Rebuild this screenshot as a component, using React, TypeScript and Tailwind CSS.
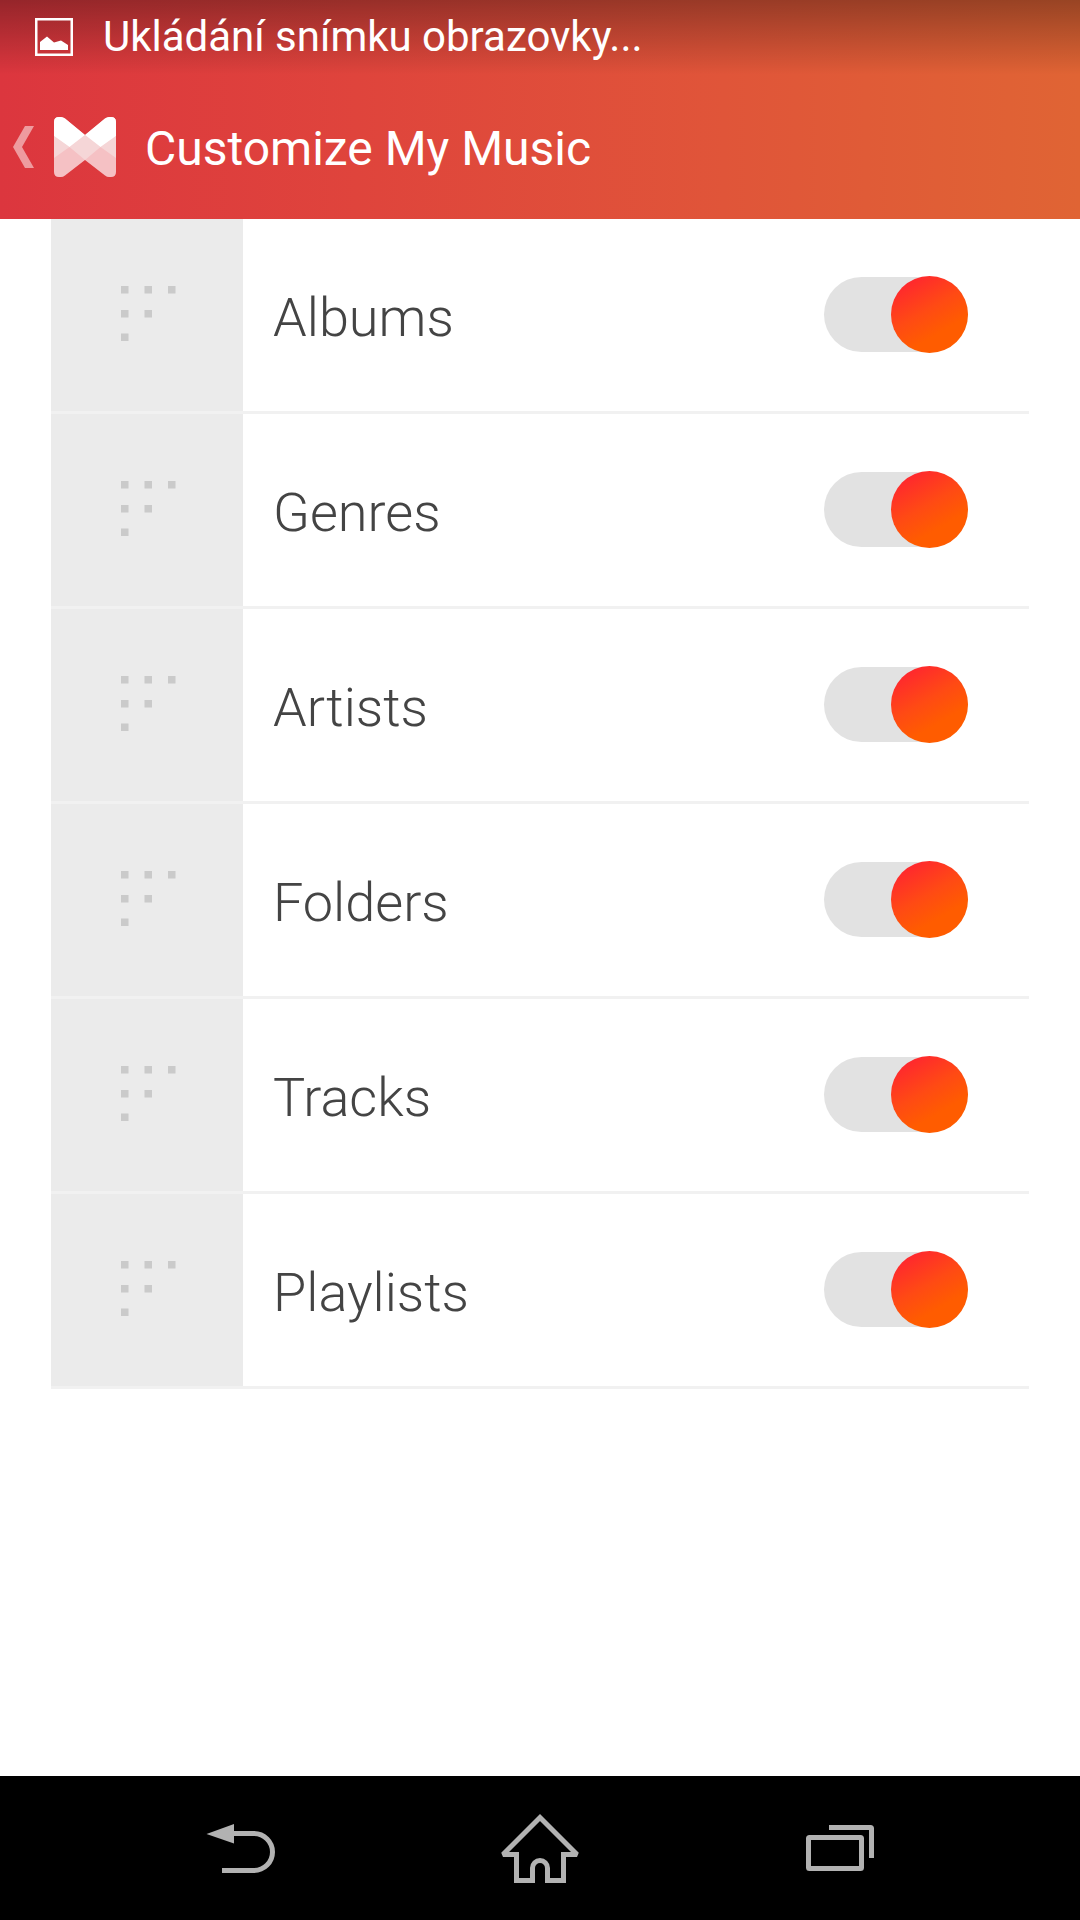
import { useState } from 'react';

interface Section {
  id: string;
  name: string;
}

const sections: Section[] = [
  { id: 'albums', name: 'Albums' },
  { id: 'genres', name: 'Genres' },
  { id: 'artists', name: 'Artists' },
  { id: 'folders', name: 'Folders' },
  { id: 'tracks', name: 'Tracks' },
  { id: 'playlists', name: 'Playlists' },
];

function PictureIcon() {
  return (
    <svg viewBox="0 0 38 38" className="size-[38px]" fill="none" aria-hidden="true">
      <rect x="1.25" y="1.25" width="35.5" height="35.5" stroke="#fff" strokeWidth="2.5" />
      <path d="M5 32V24L12 18.5L19 24.5L26 22.5L33 27V32Z" fill="#fff" />
    </svg>
  );
}

function BackChevron() {
  return (
    <svg viewBox="0 0 21 42" className="h-[42px] w-[21px]" aria-hidden="true">
      <path d="M12 0H21L9 21L21 42H12L0 21Z" fill="#fff" fillOpacity="0.5" />
    </svg>
  );
}

function Logo() {
  return (
    <svg viewBox="0 0 62 60" className="h-[60px] w-[62px]" aria-hidden="true">
      <path
        d="M0 5Q0 0 5 0H7Q9 0 11 1.5L31 18L51 1.5Q53 0 55 0H57Q62 0 62 5V55Q62 60 57 60H55Q53 60 51 58.5L31 43L11 58.5Q9 60 7 60H5Q0 60 0 55Z"
        fill="#f5c1c4"
      />
      <path d="M0 19V41L15.5 30L31 43L46.5 30L62 41V19L46.5 30L31 18L15.5 30Z" fill="#f5d6d7" />
      <path
        d="M0 19V5Q0 0 5 0H7Q9 0 11 1.5L31 18L51 1.5Q53 0 55 0H57Q62 0 62 5V19L46.5 30L31 18L15.5 30Z"
        fill="#fff"
      />
    </svg>
  );
}

function DragDots() {
  return (
    <svg viewBox="0 0 60 60" className="size-[60px]" fill="#cacaca" aria-hidden="true">
      <rect x="4" y="1" width="7.5" height="7.5" />
      <rect x="27.5" y="1" width="7.5" height="7.5" />
      <rect x="51" y="1" width="7.5" height="7.5" />
      <rect x="4" y="25" width="7.5" height="7.5" />
      <rect x="27.5" y="25" width="7.5" height="7.5" />
      <rect x="4" y="48.5" width="7.5" height="7.5" />
    </svg>
  );
}

function SectionRow({ section, enabled, onToggle }: { section: Section; enabled: boolean; onToggle: () => void }) {
  return (
    <li className="flex border-b-3 border-[#f1f1f1]">
      <button
        type="button"
        aria-label={`Move ${section.name}`}
        className="flex size-48 shrink-0 items-center justify-center bg-[#ebebeb]"
      >
        <DragDots />
      </button>
      <div className="flex flex-1 items-center justify-between pr-[61px] pb-0.5 pl-[30px]">
        <label htmlFor={section.id} className="flex-1 pt-2 text-[54px] leading-[64px] font-light text-[#444]">
          {section.name}
        </label>
        <input
          id={section.id}
          type="checkbox"
          role="switch"
          checked={enabled}
          onChange={onToggle}
          className="flex h-[75px] w-36 shrink-0 appearance-none items-center rounded-full bg-[#e2e2e2] before:size-[77px] before:shrink-0 before:rounded-full before:bg-[#bdbdbd] checked:justify-end checked:before:bg-[linear-gradient(150deg,#ff2530_10%,#ff4a14_45%,#ff5c00_70%)]"
        />
      </div>
    </li>
  );
}

export default function App() {
  const [enabled, setEnabled] = useState<string[]>(sections.map((s) => s.id));

  const toggle = (id: string) => {
    setEnabled((prev) => (prev.includes(id) ? prev.filter((s) => s !== id) : [...prev, id]));
  };

  return (
    <div className="flex min-h-screen flex-col bg-white font-[Roboto,sans-serif]">
      <header className="bg-[linear-gradient(90deg,#dc363e_0%,#df443c_33%,#e05539_67%,#e06434_100%)] text-white">
        <div className="flex h-[75px] items-center gap-[30px] bg-linear-to-b from-black/32 to-transparent pb-0.5 pl-[35px]">
          <PictureIcon />
          <p className="text-[42px] leading-[50px]">Ukládání snímku obrazovky...</p>
        </div>
        <div className="flex h-36 items-center pl-[13px]">
          <button type="button" aria-label="Back" className="flex items-center gap-5">
            <BackChevron />
            <Logo />
          </button>
          <h1 className="pt-1 pl-[29px] text-[48px] leading-[56px]">Customize My Music</h1>
        </div>
      </header>

      <main className="flex-1 px-[51px]">
        <ul>
          {sections.map((section) => (
            <SectionRow
              key={section.id}
              section={section}
              enabled={enabled.includes(section.id)}
              onToggle={() => toggle(section.id)}
            />
          ))}
        </ul>
      </main>

      <nav className="flex h-36 bg-black px-[90px] text-[#b2b2b2]">
        <button type="button" aria-label="Back" className="flex flex-1 items-center justify-center">
          <svg viewBox="0 0 84 84" className="size-[84px]" fill="none">
            <path d="M8.5 28L36 18V37.5Z" fill="currentColor" />
            <path d="M35 27.5H56A18.5 18.5 0 0 1 56 64.5H24" stroke="currentColor" strokeWidth="5" />
          </svg>
        </button>
        <button type="button" aria-label="Home" className="flex flex-1 items-center justify-center">
          <svg viewBox="0 0 84 84" className="size-[84px]" fill="none" stroke="currentColor" strokeWidth="5">
            <path
              d="M42 11.5L79 48.5H65.5V74.5H49.5V62A7.5 7.5 0 0 0 34.5 62V74.5H18.5V48.5H5Z"
              strokeMiterlimit="2"
            />
          </svg>
        </button>
        <button type="button" aria-label="Recent apps" className="flex flex-1 items-center justify-center">
          <svg viewBox="0 0 84 84" className="size-[84px]" fill="none" stroke="currentColor" strokeWidth="5">
            <rect x="10.5" y="31.5" width="53" height="31" rx="1" />
            <path d="M31 21.5H72.5Q73.5 21.5 73.5 22.5V52" />
          </svg>
        </button>
      </nav>
    </div>
  );
}
